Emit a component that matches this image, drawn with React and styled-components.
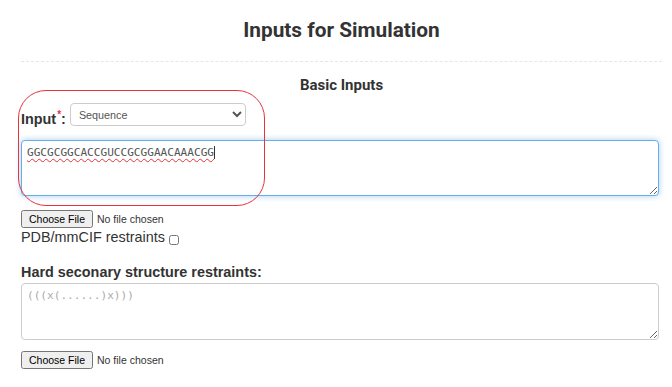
import styled, { createGlobalStyle } from 'styled-components'

const Global = createGlobalStyle`
  body {
    margin: 0;
    background: #fff;
    font-family: "Liberation Sans", Arial, sans-serif;
    font-size: 14.4px;
    color: #333;
  }
`

const Page = styled.div`
  padding: 17px 10px 0 21px;
`

const Title = styled.h1`
  margin: 0;
  font-family: Roboto, "Liberation Sans", sans-serif;
  font-weight: 700;
  font-size: 20.8px;
  line-height: 26px;
  text-align: center;
  color: #333;
`

const Rule = styled.hr`
  margin: 18px 0 0;
  border: 0;
  border-top: 1px dashed #e6e6e6;
`

const Section = styled.h2`
  margin: 14px 0 0;
  font-family: Roboto, "Liberation Sans", sans-serif;
  font-weight: 700;
  font-size: 15px;
  line-height: 18px;
  text-align: center;
  color: #333;
`

const Marked = styled.div`
  position: relative;
  padding-top: 8px;
`

const Highlight = styled.div`
  position: absolute;
  left: -3px;
  top: -4px;
  width: 245px;
  height: 114px;
  border: 1px solid #e8323c;
  border-radius: 28px;
  pointer-events: none;
`

const Row = styled.div`
  display: flex;
  align-items: center;
  gap: 4px;
`

const Label = styled.label`
  font-weight: 700;
  font-size: 14.4px;
  line-height: 18px;
  padding-top: 4px;
  & sup {
    color: #e8323c;
    font-size: 10px;
    margin-left: 1px;
  }
`

const Select = styled.select`
  width: 176px;
  height: 23px;
  padding: 0 4px 0 4px;
  border: 1px solid #ccc;
  border-radius: 4px;
  background: #fff;
  color: #555;
  font-family: "Liberation Sans", Arial, sans-serif;
  font-size: 10.8px;
`

const Box = styled.div`
  box-sizing: border-box;
  width: 638px;
  height: ${(p) => p.$h}px;
  margin-top: ${(p) => p.$top}px;
  padding: 5px 5px;
  border: 1px solid ${(p) => (p.$focus ? '#66afe9' : '#ccc')};
  border-radius: 4px;
  box-shadow: ${(p) => (p.$focus ? '0 0 6px rgba(102, 175, 233, 0.6)' : 'none')};
  font-family: "DejaVu Sans Mono", "Liberation Mono", monospace;
  font-size: 11.1px;
  line-height: 14px;
  color: ${(p) => (p.$placeholder ? '#aaa' : '#555')};
  resize: vertical;
  overflow: auto;
  background: #fff;
`

const Spell = styled.span`
  text-decoration: underline wavy #e8323c;
  text-decoration-thickness: 1px;
  text-underline-offset: 2px;
  border-right: 1px solid #333;
`

const FileInput = styled.input`
  display: block;
  margin-top: ${(p) => p.$top}px;
  font-family: "Liberation Sans", Arial, sans-serif;
  font-size: 10.5px;
  color: #333;
`

const Check = styled.div`
  margin-top: 0;
  font-size: 14.4px;
  line-height: 18px;
  display: flex;
  align-items: flex-end;
  gap: 4px;
  & input {
    width: 10px;
    height: 10px;
    margin: 0 0 1px;
  }
`

const SubLabel = styled.div`
  margin-top: 17px;
  font-weight: 700;
  font-size: 14.4px;
  line-height: 18px;
`

export default function App() {
  return (
    <>
      <Global />
      <Page>
        <Title>Inputs for Simulation</Title>
        <Rule />
        <Section>Basic Inputs</Section>
        <Marked>
          <Highlight />
          <Row>
            <Label>
              Input<sup>*</sup>:
            </Label>
            <Select defaultValue="seq">
              <option value="seq">Sequence</option>
              <option value="pdb">PDB</option>
            </Select>
          </Row>
          <Box $h={56} $top={12} $focus>
            <Spell>GGCGCGGCACCGUCCGCGGAACAAACGG</Spell>
          </Box>
        </Marked>
        <FileInput type="file" $top={14} />
        <Check>
          PDB/mmCIF restraints <input type="checkbox" />
        </Check>
        <SubLabel>Hard seconary structure restraints:</SubLabel>
        <Box $h={57} $top={2} $placeholder>
          (((x(......)x)))
        </Box>
        <FileInput type="file" $top={11} />
      </Page>
    </>
  )
}
